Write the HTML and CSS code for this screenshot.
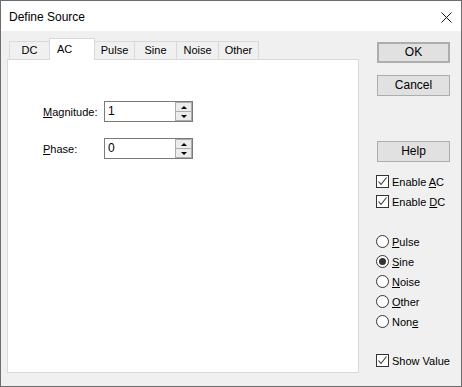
FILE: index.html
```html
<!DOCTYPE html>
<html lang="en">
<head>
    <meta charset="UTF-8">
    <title>Define Source</title>
    <link rel="stylesheet" href="styles.css">
</head>
<body>
    <div class="window">
        <div class="titlebar">
            <span class="title">Define Source</span>
            <svg class="close" width="11" height="11" viewBox="0 0 11 11">
                <path d="M0.5 0.5 L10.5 10.5 M10.5 0.5 L0.5 10.5" stroke="#111" stroke-width="1" fill="none"/>
            </svg>
        </div>
        <div class="client">
            <div class="sheet">
                <div class="tabs">
                    <div class="tab tab-dc">DC</div>
                    <div class="tab tab-ac active">AC</div>
                    <div class="tab tab-pulse">Pulse</div>
                    <div class="tab tab-sine">Sine</div>
                    <div class="tab tab-noise">Noise</div>
                    <div class="tab tab-other">Other</div>
                </div>
                <div class="panel">
                    <div class="field">
                        <label><u>M</u>agnitude:</label>
                        <div class="spin">
                            <span class="spin-value">1</span>
                            <div class="spin-btns">
                                <span class="spin-btn"><i class="arrow-up"></i></span>
                                <span class="spin-btn"><i class="arrow-down"></i></span>
                            </div>
                        </div>
                    </div>
                    <div class="field">
                        <label><u>P</u>hase:</label>
                        <div class="spin">
                            <span class="spin-value">0</span>
                            <div class="spin-btns">
                                <span class="spin-btn"><i class="arrow-up"></i></span>
                                <span class="spin-btn"><i class="arrow-down"></i></span>
                            </div>
                        </div>
                    </div>
                </div>
            </div>

            <div class="side">
                <div class="btn default btn-ok">OK</div>
                <div class="btn btn-cancel">Cancel</div>
                <div class="btn btn-help">Help</div>

                <div class="opt opt-first">
                    <span class="box checked"><svg width="11" height="11" viewBox="0 0 11 11"><path d="M1.5 5.5 L4 8.5 L9.5 1.5" stroke="#333" stroke-width="1.1" fill="none"/></svg></span>
                    <span>Enable <u>A</u>C</span>
                </div>
                <div class="opt">
                    <span class="box checked"><svg width="11" height="11" viewBox="0 0 11 11"><path d="M1.5 5.5 L4 8.5 L9.5 1.5" stroke="#333" stroke-width="1.1" fill="none"/></svg></span>
                    <span>Enable <u>D</u>C</span>
                </div>

                <div class="opt opt-radios">
                    <span class="radio"></span>
                    <span><u>P</u>ulse</span>
                </div>
                <div class="opt">
                    <span class="radio selected"></span>
                    <span><u>S</u>ine</span>
                </div>
                <div class="opt">
                    <span class="radio"></span>
                    <span><u>N</u>oise</span>
                </div>
                <div class="opt">
                    <span class="radio"></span>
                    <span><u>O</u>ther</span>
                </div>
                <div class="opt">
                    <span class="radio"></span>
                    <span>Non<u>e</u></span>
                </div>

                <div class="opt opt-show">
                    <span class="box checked"><svg width="11" height="11" viewBox="0 0 11 11"><path d="M1.5 5.5 L4 8.5 L9.5 1.5" stroke="#333" stroke-width="1.1" fill="none"/></svg></span>
                    <span>Show Value</span>
                </div>
            </div>
        </div>
    </div>
</body>
</html>
```

FILE: styles.css
```css
body {
    margin: 0;
    font-family: "Liberation Sans", Arial, sans-serif;
    font-size: 11px;
    color: #000;
}
.window {
    width: 462px;
    height: 387px;
    box-sizing: border-box;
    border: 1px solid #6d6d6d;
    background-color: #f0f0f0;
    display: flex;
    flex-direction: column;
}
.titlebar {
    height: 30px;
    background-color: #fff;
    display: flex;
    align-items: center;
    justify-content: space-between;
    padding: 0 9px 0 8px;
}
.title {
    font-size: 12px;
    margin-top: 1px;
}
.close {
    margin-top: 2px;
}
.client {
    flex: 1;
    display: flex;
    padding: 7px 0 0 6px;
}
.sheet {
    width: 352px;
    display: flex;
    flex-direction: column;
}
.tabs {
    display: flex;
    align-items: flex-end;
    height: 21px;
    padding-left: 2px;
}
.tab {
    height: 18px;
    box-sizing: border-box;
    border: 1px solid #d9d9d9;
    border-bottom: 0;
    margin-left: -1px;
    text-align: center;
    line-height: 17px;
    background-color: #f0f0f0;
}
.tab-dc { width: 41px; margin-left: 0; }
.tab-ac { width: 46px; }
.tab-pulse { width: 41px; }
.tab-sine { width: 43px; }
.tab-noise { width: 43px; }
.tab-other { width: 41px; }
.tab.active {
    height: 22px;
    padding-top: 1px;
    line-height: 18px;
    background-color: #fff;
    margin-bottom: -1px;
    position: relative;
    z-index: 1;
    text-align: left;
    padding-left: 7px;
}
.panel {
    height: 314px;
    box-sizing: border-box;
    border: 1px solid #d9d9d9;
    background-color: #fff;
    padding: 41px 0 0 35px;
}
.field {
    display: flex;
    align-items: center;
    height: 21px;
    margin-bottom: 16px;
}
.field label {
    width: 61px;
}
.spin {
    width: 89px;
    height: 21px;
    box-sizing: border-box;
    border: 1px solid #7a7a7a;
    background-color: #fff;
    display: flex;
}
.spin-value {
    flex: 1;
    padding-left: 3px;
    line-height: 19px;
    font-size: 12px;
}
.spin-btns {
    width: 17px;
    display: flex;
    flex-direction: column;
}
.spin-btn {
    flex: 1;
    box-sizing: border-box;
    border: 1px solid #adadad;
    background-color: #ececec;
    display: flex;
    align-items: center;
    justify-content: center;
}
.spin-btn + .spin-btn {
    border-top: 0;
}
.arrow-up {
    border-left: 3px solid transparent;
    border-right: 3px solid transparent;
    border-bottom: 3px solid #000;
}
.arrow-down {
    border-left: 3px solid transparent;
    border-right: 3px solid transparent;
    border-top: 3px solid #000;
}
.side {
    margin-left: 17px;
    width: 80px;
    display: flex;
    flex-direction: column;
}
.btn {
    width: 73px;
    height: 21px;
    margin-left: 1px;
    box-sizing: border-box;
    border: 1px solid #adadad;
    background-color: #e1e1e1;
    text-align: center;
    line-height: 19px;
    font-size: 12px;
}
.btn.default {
    border: 2px solid #adadad;
    line-height: 17px;
}
.btn-ok { margin-top: 4px; }
.btn-cancel { margin-top: 12px; }
.btn-help { margin-top: 45px; }
.opt {
    display: flex;
    align-items: center;
    height: 13px;
    margin-top: 7px;
    white-space: nowrap;
}
.opt-first { margin-top: 13px; }
.opt-radios { margin-top: 27px; }
.opt-show { margin-top: 26px; }
.opt span + span {
    margin-left: 3px;
}
.box {
    width: 13px;
    height: 13px;
    box-sizing: border-box;
    border: 1px solid #333;
    background-color: #fff;
    display: flex;
    align-items: center;
    justify-content: center;
}
.radio {
    width: 13px;
    height: 13px;
    box-sizing: border-box;
    border: 1px solid #333;
    border-radius: 50%;
    background-color: #fff;
    display: flex;
    align-items: center;
    justify-content: center;
}
.radio.selected::after {
    content: "";
    width: 7px;
    height: 7px;
    border-radius: 50%;
    background-color: #333;
}
```
